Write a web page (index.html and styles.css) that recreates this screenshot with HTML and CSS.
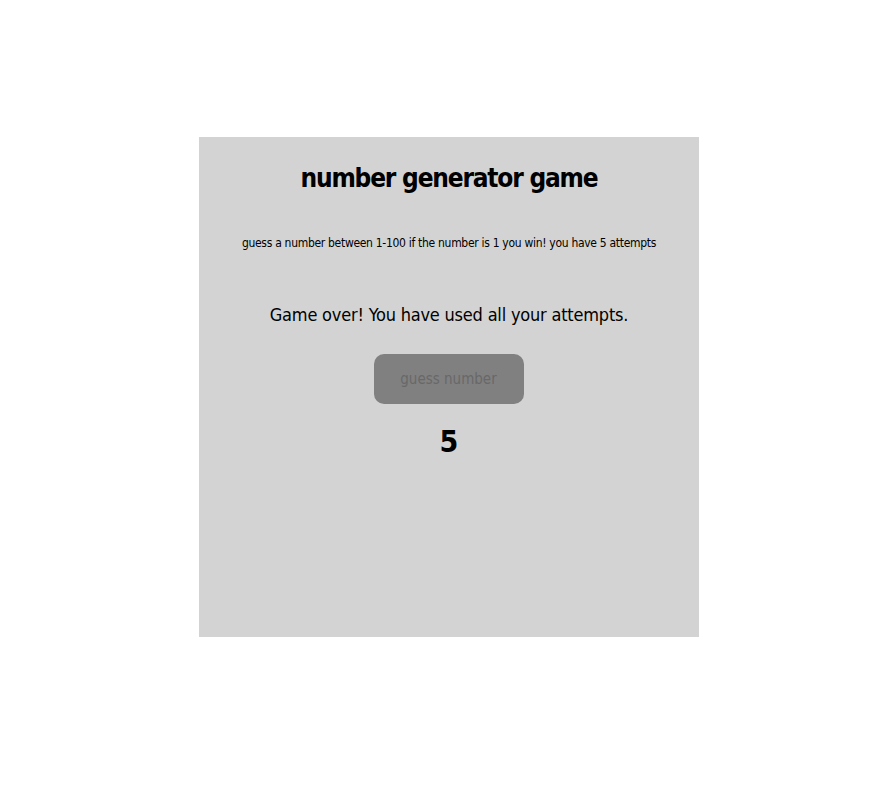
FILE: index.html
```html
<!DOCTYPE html>
<html lang="en">
<head>
  <meta charset="UTF-8">
  <meta name="viewport" content="width=device-width, initial-scale=1.0">
  <title>number generator game</title>
  <link rel="stylesheet" href="styles.css">
</head>
<body>
  <div class="game">
    <h1>number generator game</h1>
    <p class="rules">guess a number between 1-100 if the number is 1 you win! you have 5 attempts</p>
    <p class="message" id="message">Game over! You have used all your attempts.</p>
    <input type="number" class="guess" id="guess" placeholder="guess number" disabled>
    <p class="attempts" id="attempts">5</p>
  </div>
</body>
</html>
```

FILE: styles.css
```css
body {
  margin: 0;
  font-family: "DejaVu Sans Condensed", "Liberation Sans Narrow", sans-serif;
}
.game {
  width: 500px;
  height: 500px;
  margin: 137px 0 0 199px;
  background-color: lightgray;
  text-align: center;
  display: flex;
  flex-direction: column;
  align-items: center;
}
h1 {
  font-size: 26px;
  line-height: 32px;
  letter-spacing: -1.2px;
  margin: 25px 0 0;
}
.rules {
  font-size: 12px;
  line-height: 16px;
  letter-spacing: -0.3px;
  margin: 41px 0 0;
}
.message {
  font-size: 18px;
  line-height: 24px;
  letter-spacing: -0.2px;
  margin: 52px 0 0;
}
/* spinner space is kept by the number input, so pad the left to re-center */
.guess {
  width: 150px;
  height: 50px;
  box-sizing: border-box;
  margin-top: 27px;
  padding: 0 0 0 14px;
  border: none;
  border-radius: 10px;
  background-color: gray;
  font-family: inherit;
  font-size: 15px;
  text-align: center;
}
.guess::placeholder {
  color: #686868;
}
.attempts {
  font-size: 30px;
  line-height: 34px;
  font-weight: bold;
  margin: 21px 0 0;
}
```
